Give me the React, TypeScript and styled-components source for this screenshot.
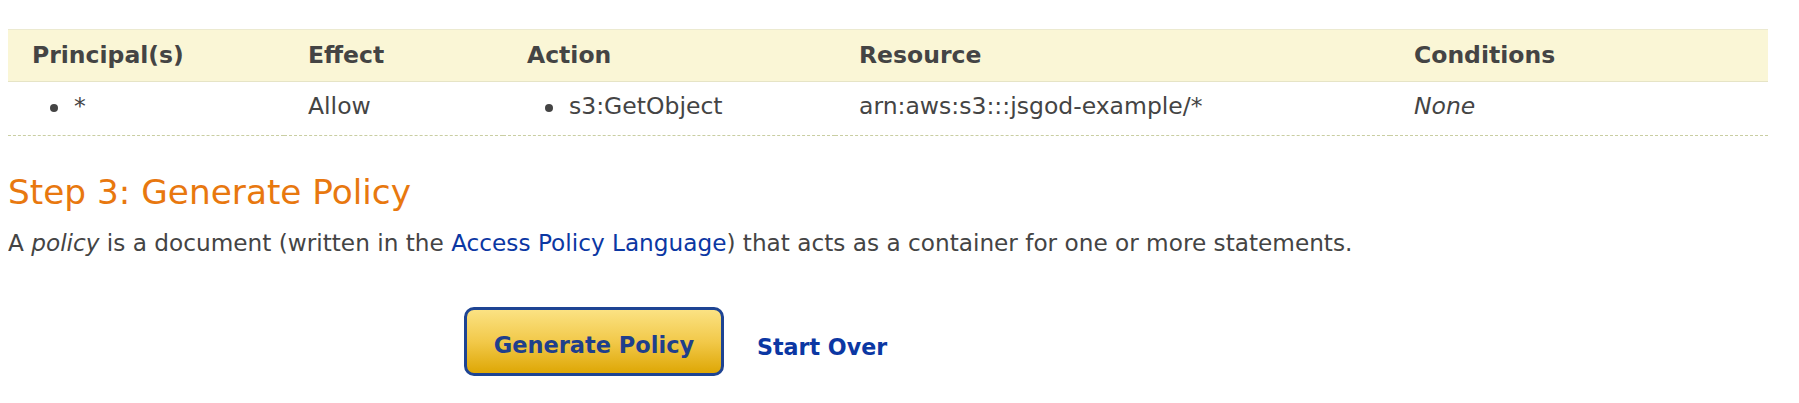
import React from "react";
import styled, { createGlobalStyle } from "styled-components";

const GlobalStyle = createGlobalStyle`
  body {
    margin: 8px;
    background: #ffffff;
    font-family: "DejaVu Sans", Verdana, sans-serif;
    color: #444444;
  }
`;

const Page = styled.div`
  display: flex;
  flex-direction: column;
  padding-top: 21px;
`;

const Table = styled.table`
  width: 1760px;
  border-collapse: collapse;
  table-layout: fixed;
`;

const HeadRow = styled.tr`
  background: #faf6d6;
  border-top: 1px solid #ecead0;
  border-bottom: 1px solid #e6e4c6;
`;

const Th = styled.th<{ $w: number }>`
  box-sizing: border-box;
  width: ${(p) => p.$w}px;
  text-align: left;
  padding: 11px 24px 12px;
  font-size: 23.5px;
  line-height: 28px;
  font-weight: bold;
  color: #444444;
`;

const BodyRow = styled.tr`
  border-bottom: 1px dashed #c9cea2;
`;

const Td = styled.td<{ $italic?: boolean }>`
  padding: 10px 24px 15px;
  font-size: 23.5px;
  line-height: 28px;
  color: #444444;
  font-style: ${(p) => (p.$italic ? "italic" : "normal")};
  vertical-align: top;
`;

const List = styled.ul`
  list-style: none;
  margin: 0;
  padding: 0;
`;

const Item = styled.li`
  display: flex;
  align-items: center;
  gap: 16px;
`;

const Dot = styled.span`
  width: 8px;
  height: 8px;
  margin-left: 18px;
  margin-top: 3px;
  border-radius: 50%;
  background: #444444;
  flex: none;
`;

const Heading = styled.h2`
  margin: 36px 0 0;
  font-size: 34.3px;
  line-height: 40px;
  font-weight: normal;
  color: #e8780f;
`;

const Para = styled.p`
  margin: 17px 0 0;
  font-size: 23.2px;
  line-height: 28px;
  color: #444444;
`;

const Link = styled.a`
  color: #0b37a3;
  text-decoration: none;
`;

const Actions = styled.div`
  display: flex;
  align-items: center;
  gap: 33px;
  margin: 50px 0 0 456px;
`;

const PrimaryButton = styled.button`
  width: 260px;
  height: 69px;
  box-sizing: border-box;
  padding: 7px 0 0;
  border: 3px solid #1e4493;
  border-radius: 10px;
  background: linear-gradient(#fbe283, #f2c94a 50%, #dea705);
  font-family: "DejaVu Sans", Verdana, sans-serif;
  font-size: 22.5px;
  font-weight: bold;
  color: #1f3f8c;
  cursor: pointer;
`;

const TextAction = styled.a`
  font-size: 22.2px;
  font-weight: bold;
  color: #0b37a3;
  text-decoration: none;
  padding-top: 10px;
`;

const columns = [
  { label: "Principal(s)", w: 276 },
  { label: "Effect", w: 219 },
  { label: "Action", w: 332 },
  { label: "Resource", w: 555 },
  { label: "Conditions", w: 378 },
];

export default function App() {
  return (
    <>
      <GlobalStyle />
      <Page>
        <Table>
          <thead>
            <HeadRow>
              {columns.map((c) => (
                <Th key={c.label} $w={c.w}>
                  {c.label}
                </Th>
              ))}
            </HeadRow>
          </thead>
          <tbody>
            <BodyRow>
              <Td>
                <List>
                  <Item>
                    <Dot />
                    <span>*</span>
                  </Item>
                </List>
              </Td>
              <Td>Allow</Td>
              <Td>
                <List>
                  <Item>
                    <Dot />
                    <span>s3:GetObject</span>
                  </Item>
                </List>
              </Td>
              <Td>arn:aws:s3:::jsgod-example/*</Td>
              <Td $italic>None</Td>
            </BodyRow>
          </tbody>
        </Table>
        <Heading>Step 3: Generate Policy</Heading>
        <Para>
          A <em>policy</em> is a document (written in the{" "}
          <Link href="#">Access Policy Language</Link>) that acts as a container
          for one or more statements.
        </Para>
        <Actions>
          <PrimaryButton type="button">Generate Policy</PrimaryButton>
          <TextAction href="#">Start Over</TextAction>
        </Actions>
      </Page>
    </>
  );
}
